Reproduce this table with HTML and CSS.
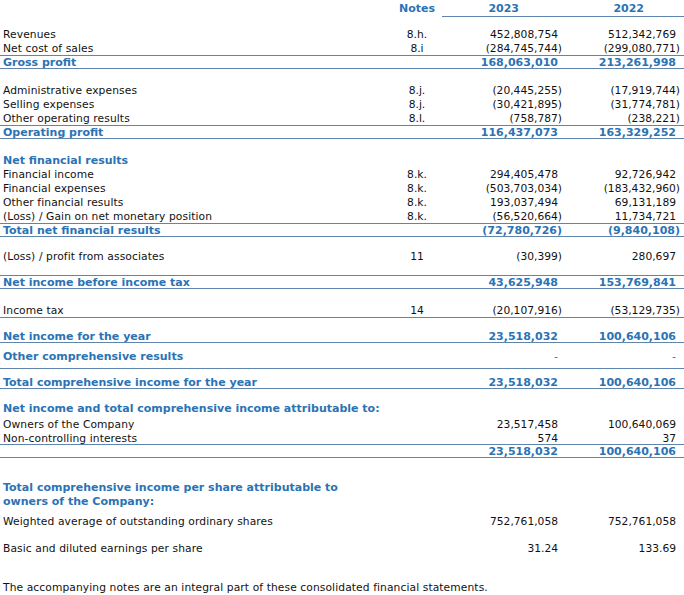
FILE: index.html
```html
<!DOCTYPE html>
<html>
<head>
<meta charset="utf-8">
<link rel="stylesheet" href="styles.css">
</head>
<body>
<div class="sheet">
  <div class="row head">
    <div class="c-label"></div>
    <div class="c-note hd">Notes</div>
    <div class="c-n hd h23 ul ul-first">2023</div>
    <div class="c-n hd h22 ul">2022</div>
    <div class="ul"></div>
  </div>

  <div class="row r14 m9"><div class="c-label">Revenues</div><div class="c-note">8.h.</div><div class="c-n pos">452,808,754</div><div class="c-n pos">512,342,769</div></div>
  <div class="row r14"><div class="c-label">Net cost of sales</div><div class="c-note">8.i</div><div class="c-n">(284,745,744)</div><div class="c-n">(299,080,771)</div></div>
  <div class="row sub"><div class="c-label">Gross profit</div><div class="c-note"></div><div class="c-n pos">168,063,010</div><div class="c-n pos">213,261,998</div></div>

  <div class="row r14 m14"><div class="c-label">Administrative expenses</div><div class="c-note">8.j.</div><div class="c-n">(20,445,255)</div><div class="c-n">(17,919,744)</div></div>
  <div class="row r14"><div class="c-label">Selling expenses</div><div class="c-note">8.j.</div><div class="c-n">(30,421,895)</div><div class="c-n">(31,774,781)</div></div>
  <div class="row r14"><div class="c-label">Other operating results</div><div class="c-note">8.l.</div><div class="c-n">(758,787)</div><div class="c-n">(238,221)</div></div>
  <div class="row sub"><div class="c-label">Operating profit</div><div class="c-note"></div><div class="c-n pos">116,437,073</div><div class="c-n pos">163,329,252</div></div>

  <div class="row r14 m14 blue"><div class="c-label">Net financial results</div></div>
  <div class="row r14"><div class="c-label">Financial income</div><div class="c-note">8.k.</div><div class="c-n pos">294,405,478</div><div class="c-n pos">92,726,942</div></div>
  <div class="row r14"><div class="c-label">Financial expenses</div><div class="c-note">8.k.</div><div class="c-n">(503,703,034)</div><div class="c-n">(183,432,960)</div></div>
  <div class="row r14"><div class="c-label">Other financial results</div><div class="c-note">8.k.</div><div class="c-n pos">193,037,494</div><div class="c-n pos">69,131,189</div></div>
  <div class="row r14"><div class="c-label">(Loss) / Gain on net monetary position</div><div class="c-note">8.k.</div><div class="c-n">(56,520,664)</div><div class="c-n pos">11,734,721</div></div>
  <div class="row sub"><div class="c-label">Total net financial results</div><div class="c-note"></div><div class="c-n">(72,780,726)</div><div class="c-n">(9,840,108)</div></div>

  <div class="row r14 m12"><div class="c-label">(Loss) / profit from associates</div><div class="c-note">11</div><div class="c-n">(30,399)</div><div class="c-n pos">280,697</div></div>
  <div class="row sub m12"><div class="c-label">Net income before income tax</div><div class="c-note"></div><div class="c-n pos">43,625,948</div><div class="c-n pos">153,769,841</div></div>

  <div class="row r14 m14 bb"><div class="c-label">Income tax</div><div class="c-note">14</div><div class="c-n">(20,107,916)</div><div class="c-n">(53,129,735)</div></div>
  <div class="row sub12 m12"><div class="c-label">Net income for the year</div><div class="c-note"></div><div class="c-n pos">23,518,032</div><div class="c-n pos">100,640,106</div></div>
  <div class="row oc"><div class="c-label">Other comprehensive results</div><div class="c-note"></div><div class="c-n pos dash">-</div><div class="c-n pos dash">-</div></div>
  <div class="row tc"><div class="c-label">Total comprehensive income for the year</div><div class="c-note"></div><div class="c-n pos">23,518,032</div><div class="c-n pos">100,640,106</div></div>

  <div class="row r14 m12 blue"><div class="c-label">Net income and total comprehensive income attributable to:</div></div>
  <div class="row r14 m2"><div class="c-label">Owners of the Company</div><div class="c-note"></div><div class="c-n pos">23,517,458</div><div class="c-n pos">100,640,069</div></div>
  <div class="row r13"><div class="c-label">Non-controlling interests</div><div class="c-note"></div><div class="c-n pos">574</div><div class="c-n pos">37</div></div>
  <div class="row sub"><div class="c-label"></div><div class="c-note"></div><div class="c-n pos">23,518,032</div><div class="c-n pos">100,640,106</div></div>

  <div class="row two m22 blue"><div class="c-label">Total comprehensive income per share attributable to<br>owners of the Company:</div></div>
  <div class="row r14 m6"><div class="c-label">Weighted average of outstanding ordinary shares</div><div class="c-note"></div><div class="c-n pos">752,761,058</div><div class="c-n pos">752,761,058</div></div>
  <div class="row r14 m13"><div class="c-label">Basic and diluted earnings per share</div><div class="c-note"></div><div class="c-n pos">31.24</div><div class="c-n pos">133.69</div></div>

  <div class="row r14 m25"><div class="c-label foot">The accompanying notes are an integral part of these consolidated financial statements.</div></div>
</div>
</body>
</html>
```
FILE: styles.css
```css
html, body {
  margin: 0;
  padding: 0;
  background: #ffffff;
}
body {
  font-family: "DejaVu Sans", Verdana, sans-serif;
  font-size: 10.7px;
  color: #111111;
  width: 684px;
  height: 595px;
  overflow: hidden;
}
.sheet {
  display: flex;
  flex-direction: column;
}
.row {
  display: grid;
  grid-template-columns: 387px 54px 118px 118px 1fr;
  padding-left: 3px;
  white-space: nowrap;
}
.c-label {
  letter-spacing: 0.1px;
}
.c-note {
  text-align: center;
}
.c-n {
  text-align: right;
}
.c-n.pos {
  padding-right: 4px;
}
.c-label.foot {
  grid-column: 1 / 6;
}
.head {
  height: 16px;
  padding-top: 1px;
  line-height: 15px;
}
.hd {
  font-weight: bold;
  color: #2b73b4;
  font-size: 11px;
}
.ul {
  border-bottom: 1px solid #5f84ad;
}
.ul-first {
  margin-left: -2px;
}
.h23 { padding-right: 43px; }
.h22 { padding-right: 36px; }

.r14 { height: 13px; padding-top: 1px; line-height: 14px; }
.r13 { height: 12px; padding-top: 1px; line-height: 13px; }
.two { height: 27px; padding-top: 1px; line-height: 14px; white-space: normal; }
.m2 { margin-top: 2px; }
.m6 { margin-top: 6px; }
.m9 { margin-top: 10px; }
.m12 { margin-top: 12px; }
.m13 { margin-top: 13px; }
.m14 { margin-top: 14px; }
.m22 { margin-top: 22px; }
.m25 { margin-top: 25px; }

.blue {
  color: #2b73b4;
  font-weight: bold;
  font-size: 11px;
}
.blue .c-label,
.sub .c-label, .sub12 .c-label, .oc .c-label, .tc .c-label {
  letter-spacing: 0;
}
.sub, .sub12, .oc, .tc {
  color: #2b73b4;
  font-weight: bold;
  font-size: 11px;
  border-bottom: 1px solid #5f84ad;
}
.sub {
  border-top: 1px solid #5f84ad;
  height: 11px;
  padding-top: 1px;
  line-height: 12px;
}
.sub12 {
  height: 11px;
  padding-top: 1px;
  line-height: 12px;
}
.oc {
  height: 18px;
  padding-top: 7px;
  line-height: 13px;
}
.tc {
  height: 12px;
  padding-top: 7px;
  line-height: 13px;
}
.bb {
  border-bottom: 1px solid #5f84ad;
}
.dash {
  font-weight: normal;
  color: #2b73b4;
}
```
